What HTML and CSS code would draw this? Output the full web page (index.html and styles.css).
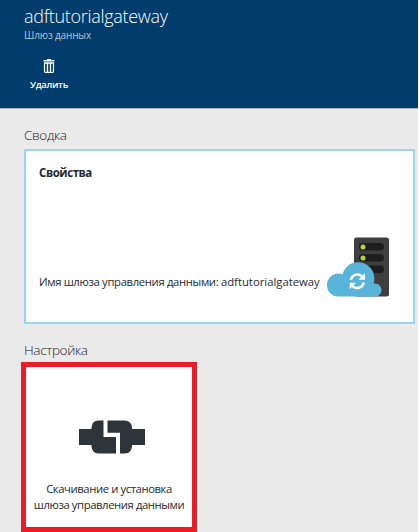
FILE: index.html
```html
<!DOCTYPE html>
<html lang="ru">
<head>
<meta charset="utf-8">
<title>adftutorialgateway</title>
<link rel="stylesheet" href="styles.css">
</head>
<body>
<div class="blade">
  <header class="header">
    <h1 class="title">adftutorialgateway</h1>
    <p class="subtitle">Шлюз данных</p>
    <button class="command">
      <svg class="trash" width="12" height="14" viewBox="0 0 12 14">
        <path d="M4 0h4v1h3.500v1.500H.5V1H4z" fill="#fff"/>
        <path d="M1.500 4v8.500a.8.800 0 0 0 .8.800h7.400a.8.800 0 0 0 .8-.8V4z" fill="none" stroke="#fff" stroke-width="1.200"/>
        <path d="M4.500 4v9M7.500 4v9" stroke="#fff" stroke-width="1.300"/>
        <path d="M1 4h10" stroke="#fff" stroke-width="1"/>
      </svg>
      <span class="command-label">Удалить</span>
    </button>
  </header>
  <main class="content">
    <h2 class="section">Сводка</h2>
    <section class="card">
      <h3 class="card-title">Свойства</h3>
      <div class="card-row">
        <p class="card-text">Имя шлюза управления данными: <span class="gateway-name">adftutorialgateway</span></p>
        <svg class="server" width="62" height="60" viewBox="0 0 62 60">
          <rect x="27" y="0.500" width="35" height="59" rx="2.500" fill="#3e3e3f"/>
          <g fill="#1e1e1e">
            <rect x="32" y="6" width="25" height="7.500" rx="3.750"/>
            <rect x="32" y="17" width="25" height="7.500" rx="3.750"/>
            <rect x="32" y="28.500" width="25" height="7.500" rx="3.750"/>
          </g>
          <circle cx="36" cy="10" r="2.500" fill="#b8d432"/>
          <circle cx="36" cy="21" r="2.500" fill="#b8d432"/>
          <path d="M11.500 59.500C5 59.500 0 54.800 0 48.200 0 41.700 5 36.500 11.500 36.500c1.600 0 3 .2 4.200.7C17.500 30 23.500 25.300 31 25.300c9.300 0 16.300 7.200 16.300 16.200 0 1.900-.2 3.500-.7 5.100 4.500-.5 7.900 2.500 7.900 6.500 0 3.800-2.800 6.400-6.500 6.400z" fill="#59b4d9"/>
          <g fill="none" stroke="#fff" stroke-width="2.500">
            <path d="M23.900 43a6.600 6.600 0 0 1 11.500-3.200"/>
            <path d="M36.700 45.500a6.600 6.600 0 0 1-11.500 3.200"/>
          </g>
          <path d="M38 36.300v6.500h-6.500zM22.700 52.200v-6.500h6.500z" fill="#fff"/>
        </svg>
      </div>
    </section>
    <h2 class="section setup-heading">Настройка</h2>
    <div class="tile">
      <div class="highlight">
        <svg class="plug" width="66" height="34" viewBox="0 0 66 34" fill="#2d343a">
          <path d="M0 9h12.500V7.500Q13 .5 19.500.5h5V17H37v16.500H19.500Q13 33 12.500 26.500V25H0z"/>
          <path d="M28.500.5H46Q52.500 1 53 7.500V9h13v16H53v1.500Q52.500 33 46 33.500h-5V12.700H28.500z"/>
        </svg>
        <p class="tile-text"><span class="line">Скачивание и установка</span><span class="line">шлюза управления данными</span></p>
      </div>
    </div>
  </main>
</div>
</body>
</html>
```
FILE: styles.css
```css
* { box-sizing: border-box; }
body {
  margin: 0;
  background: #fff;
  font-family: "Open Sans", "Noto Sans", sans-serif;
  color: #252a31;
}
h1, h2, h3, p { margin: 0; white-space: nowrap; }
.blade { width: 418px; height: 532px; background: #eaeaea; overflow: hidden; }
.header {
  height: 109px;
  padding: 4px 0 0 24px;
  background: #003c6c;
  border-bottom: 1px solid #b5b5b5;
  color: #fff;
}
.title { font-size: 18px; line-height: 25px; font-weight: 300; letter-spacing: -0.300px; }
.subtitle { font-size: 10px; line-height: 12px; color: #b9c4d0; font-weight: 500; letter-spacing: -0.150px; }
.command {
  display: flex;
  flex-direction: column;
  align-items: center;
  width: 50px;
  margin-top: 18px;
  padding: 0;
  border: 0;
  background: none;
  color: #fff;
  font: 600 9.500px/14px "Open Sans", sans-serif;
  letter-spacing: -0.300px;
}
.command-label { margin-top: 5px; }
.content { padding: 17px 3px 0 24px; }
.section { font-size: 13.500px; line-height: 18px; font-weight: 300; letter-spacing: -0.350px; color: #1c2128; }
.card {
  height: 175px;
  margin-top: 5px;
  padding: 14px 24px 0 13px;
  background: #fff;
  border: 2px solid #9ad5f4;
}
.card-title { font-size: 11.500px; line-height: 16px; font-weight: 700; letter-spacing: -0.450px; }
.card-row { display: flex; justify-content: space-between; margin-top: 56px; }
.card-text { margin-top: 36px; font-size: 11.300px; line-height: 17px; letter-spacing: -0.350px; }
.gateway-name { letter-spacing: 0; }
.server { flex: none; }
.setup-heading { margin-top: 17px; }
.tile { width: 175px; height: 173px; margin-top: 5px; background: #fff; }
.highlight {
  width: 176px;
  height: 170px;
  position: relative;
  top: -2px;
  left: -3px;
  display: flex;
  flex-direction: column;
  align-items: center;
  padding-top: 53px;
  border: 5px solid #ed1c24;
}
.plug { margin-left: 5px; }
.tile-text { margin-top: 27px; font-size: 11.300px; line-height: 16px; letter-spacing: -0.420px; text-align: center; }
.line { display: block; }
```
